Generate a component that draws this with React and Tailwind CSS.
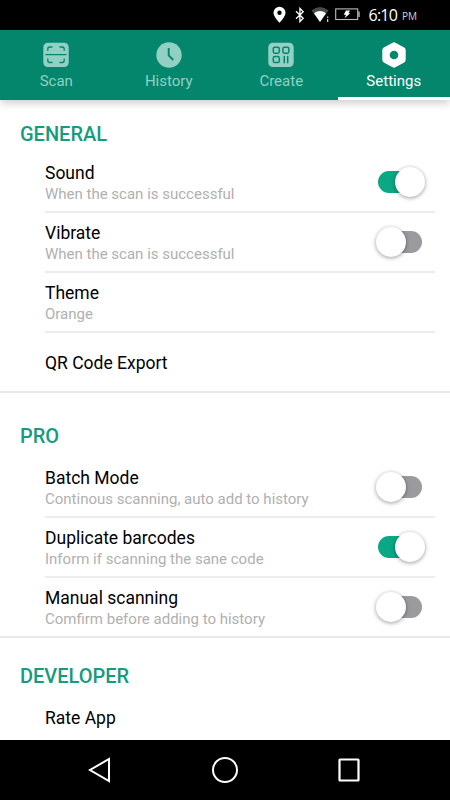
import { useState } from 'react';

const ScanIcon = () => (
  <svg width="26" height="26" viewBox="0 0 26 26" fill="none">
    <rect x="0.3" y="0.7" width="25.4" height="24.4" rx="4.5" fill="currentColor" />
    <g stroke="#03866b" strokeWidth="1.3" strokeLinecap="round">
      <path d="M3 12.6h20" />
      <path d="M4.8 8.3V7Q4.8 5 6.8 5H9M17 5h2.2q2 0 2 2v1.3M21.2 17v1.5q0 2-2 2H17M9 20.5H6.8q-2 0-2-2V17" />
    </g>
  </svg>
);

const HistoryIcon = () => (
  <svg width="26" height="26" viewBox="0 0 26 26" fill="none">
    <circle cx="13" cy="13" r="12.7" fill="currentColor" />
    <path d="M12.7 6v7.4l4.6 4.6" stroke="#03866b" strokeWidth="1.9" />
  </svg>
);

const CreateIcon = () => (
  <svg width="26" height="26" viewBox="0 0 26 26" fill="none">
    <rect x="0.3" y="0.7" width="25.4" height="24.4" rx="4.5" fill="currentColor" />
    <g stroke="#03866b" strokeWidth="1.5" strokeLinecap="round">
      <rect x="5.3" y="5.2" width="6" height="6" rx="1.6" />
      <rect x="14.9" y="5.2" width="6" height="6" rx="1.6" />
      <rect x="5.3" y="14.6" width="6" height="6" rx="1.6" />
      <path d="M16.3 14.5v6.2M19.7 14.5v6.2" />
    </g>
  </svg>
);

const SettingsIcon = () => (
  <svg width="26" height="26" viewBox="0 0 26 26">
    <path
      fillRule="evenodd"
      fill="currentColor"
      d="M11.6 0.7a2.8 2.8 0 0 1 2.8 0l8.8 4.9a3 3 0 0 1 1.5 2.6v9.6a3 3 0 0 1-1.5 2.6l-8.8 4.9a2.8 2.8 0 0 1-2.8 0l-8.8-4.9a3 3 0 0 1-1.5-2.6V8.2a3 3 0 0 1 1.5-2.6zM13 8.7a4.3 4.3 0 1 0 0 8.6a4.3 4.3 0 1 0 0-8.6z"
    />
  </svg>
);

const tabs = [
  { id: 'scan', label: 'Scan', Icon: ScanIcon },
  { id: 'history', label: 'History', Icon: HistoryIcon },
  { id: 'create', label: 'Create', Icon: CreateIcon },
  { id: 'settings', label: 'Settings', Icon: SettingsIcon },
];

function StatusBar() {
  return (
    <div className="flex h-[30px] shrink-0 items-center justify-end bg-black pr-[33px] text-white">
      <svg width="13" height="18" viewBox="0 0 13 18" className="mr-[9px] mt-[-1px]">
        <path fillRule="evenodd" fill="#fff" d="M6.5 0.8a6 6 0 0 0-6 6c0 4.3 6 9.9 6 9.9s6-5.6 6-9.9a6 6 0 0 0-6-6zm0 3.7a2.2 2.2 0 1 1 0 4.4a2.2 2.2 0 0 1 0-4.4z" />
      </svg>
      <svg width="10" height="16" viewBox="0 0 10 16" className="mr-[6px] mt-[-1px]" fill="none" stroke="#fff" strokeWidth="1.3">
        <path d="M1 4.2l7.2 7L4.9 14.6V1.4l3.3 3.4L1 11.8" />
      </svg>
      <svg width="19" height="17" viewBox="0 0 19 17" className="mr-[5px] mt-[-1px]">
        <path fill="#4b4b4b" d="M0.5 4.5Q9 -2.5 17.5 4.5L9 16z" />
        <path fill="#fff" d="M3 7.2Q9 3 15 7.2L9 16z" />
        <path fill="#ccc" d="M16 10.5h1.3v1.5H16zM16 13h1.3v3H16z" />
      </svg>
      <svg width="25" height="13" viewBox="0 0 25 13" className="mr-[9px] mt-[-1px]">
        <rect x="0.7" y="0.9" width="22" height="10.6" fill="none" stroke="#bbb" strokeWidth="1.1" />
        <path fill="#bbb" d="M23.3 3.5h1.4v5.5h-1.4z" />
        <path fill="#fff" d="M11 2.5h4l-1.5 2.8h1.8L9.5 10.3l1.5-3.6H8.7z" />
      </svg>
      <span className="font-['Open_Sans'] text-[16px] leading-[30px] tracking-[-0.8px]">6:10</span>
      <span className="ml-[5px] pt-[3px] font-['Open_Sans'] text-[10px] leading-[27px] text-[#d0d0d0]">PM</span>
    </div>
  );
}

function TabBar({ active, onSelect }) {
  return (
    <div className="relative z-10 grid h-[70px] shrink-0 grid-cols-4 bg-[#03866b] shadow-[0_3px_8px_rgba(0,0,0,0.2)]">
      {tabs.map(({ id, label, Icon }) => (
        <button
          key={id}
          onClick={() => onSelect(id)}
          className={
            id === active
              ? 'flex flex-col items-center border-b-[3px] border-white pt-3 text-white'
              : 'flex flex-col items-center border-b-[3px] border-transparent pt-3 text-[#92d0c3]'
          }
        >
          <Icon />
          <span className="mt-[3px] text-[15px] leading-5">{label}</span>
        </button>
      ))}
    </div>
  );
}

function Toggle({ defaultOn }) {
  const [on, setOn] = useState(defaultOn);

  return (
    <button
      role="switch"
      aria-checked={on}
      onClick={() => setOn(!on)}
      className={
        on
          ? 'mr-[10px] flex h-[22px] w-[48px] items-center justify-end'
          : 'mr-[11px] flex h-[22px] w-[48px] items-center'
      }
    >
      <span className={on ? 'h-[22px] w-[34px] rounded-full bg-[#0ba885]' : 'order-2 -ml-[18px] h-[22px] w-[34px] rounded-full bg-[#9b9a9f]'} />
      <span className={on ? 'z-[1] -ml-[17px] size-[30px] shrink-0 rounded-full bg-white shadow-[0_1px_4px_rgba(0,0,0,0.4)]' : 'z-[1] size-[30px] shrink-0 rounded-full bg-white shadow-[0_1px_4px_rgba(0,0,0,0.4)]'} />
    </button>
  );
}

function Row({ title, note, toggle, last }) {
  return (
    <div className={last ? 'ml-[45px] mr-[15px] flex h-[58px] items-center' : 'ml-[45px] mr-[15px] flex h-[60px] items-center border-b-2 border-[#ececec]'}>
      <div className="flex-1 pt-[2px]">
        <div className="text-[17.5px] leading-[22px] text-black">{title}</div>
        {note && <div className="text-[15px] leading-5 text-[#b0b0b0]">{note}</div>}
      </div>
      {toggle !== undefined && <Toggle defaultOn={toggle} />}
    </div>
  );
}

const SectionTitle = ({ children }) => (
  <h2 className="pl-5 text-[20px] font-medium leading-6 text-[#149c7e]">{children}</h2>
);

function NavBar() {
  return (
    <div className="flex h-[60px] shrink-0 items-center justify-center gap-[98px] bg-black">
      <svg width="26" height="28" viewBox="0 0 26 28" fill="none" stroke="#fff" strokeWidth="2">
        <path d="M22 3v22L3 14z" />
      </svg>
      <svg width="28" height="28" viewBox="0 0 28 28" fill="none" stroke="#fff" strokeWidth="2">
        <circle cx="14" cy="14" r="12" />
      </svg>
      <svg width="26" height="28" viewBox="0 0 26 28" fill="none" stroke="#fff" strokeWidth="2.2">
        <rect x="2.5" y="3.5" width="19" height="21" rx="0.5" />
      </svg>
    </div>
  );
}

export default function App() {
  const [active, setActive] = useState('settings');

  return (
    <div className="flex h-[800px] w-[450px] flex-col overflow-hidden bg-white font-['Roboto',sans-serif]">
      <StatusBar />
      <TabBar active={active} onSelect={setActive} />

      <div className="flex-1 overflow-hidden">
        <section className="border-b-2 border-[#e9e9e9] pt-[22px]">
          <SectionTitle>GENERAL</SectionTitle>
          <div className="pt-[7px]">
            <Row title="Sound" note="When the scan is successful" toggle={true} />
            <Row title="Vibrate" note="When the scan is successful" toggle={false} />
            <Row title="Theme" note="Orange" />
            <Row title="QR Code Export" last />
          </div>
        </section>

        <section className="border-b-2 border-[#e9e9e9] pt-[31px]">
          <SectionTitle>PRO</SectionTitle>
          <div className="pt-[10px]">
            <Row title="Batch Mode" note="Continous scanning, auto add to history" toggle={false} />
            <Row title="Duplicate barcodes" note="Inform if scanning the sane code" toggle={true} />
            <Row title="Manual scanning" note="Comfirm before adding to history" toggle={false} last />
          </div>
        </section>

        <section className="pt-[26px]">
          <SectionTitle>DEVELOPER</SectionTitle>
          <Row title="Rate App" last />
        </section>
      </div>

      <NavBar />
    </div>
  );
}
